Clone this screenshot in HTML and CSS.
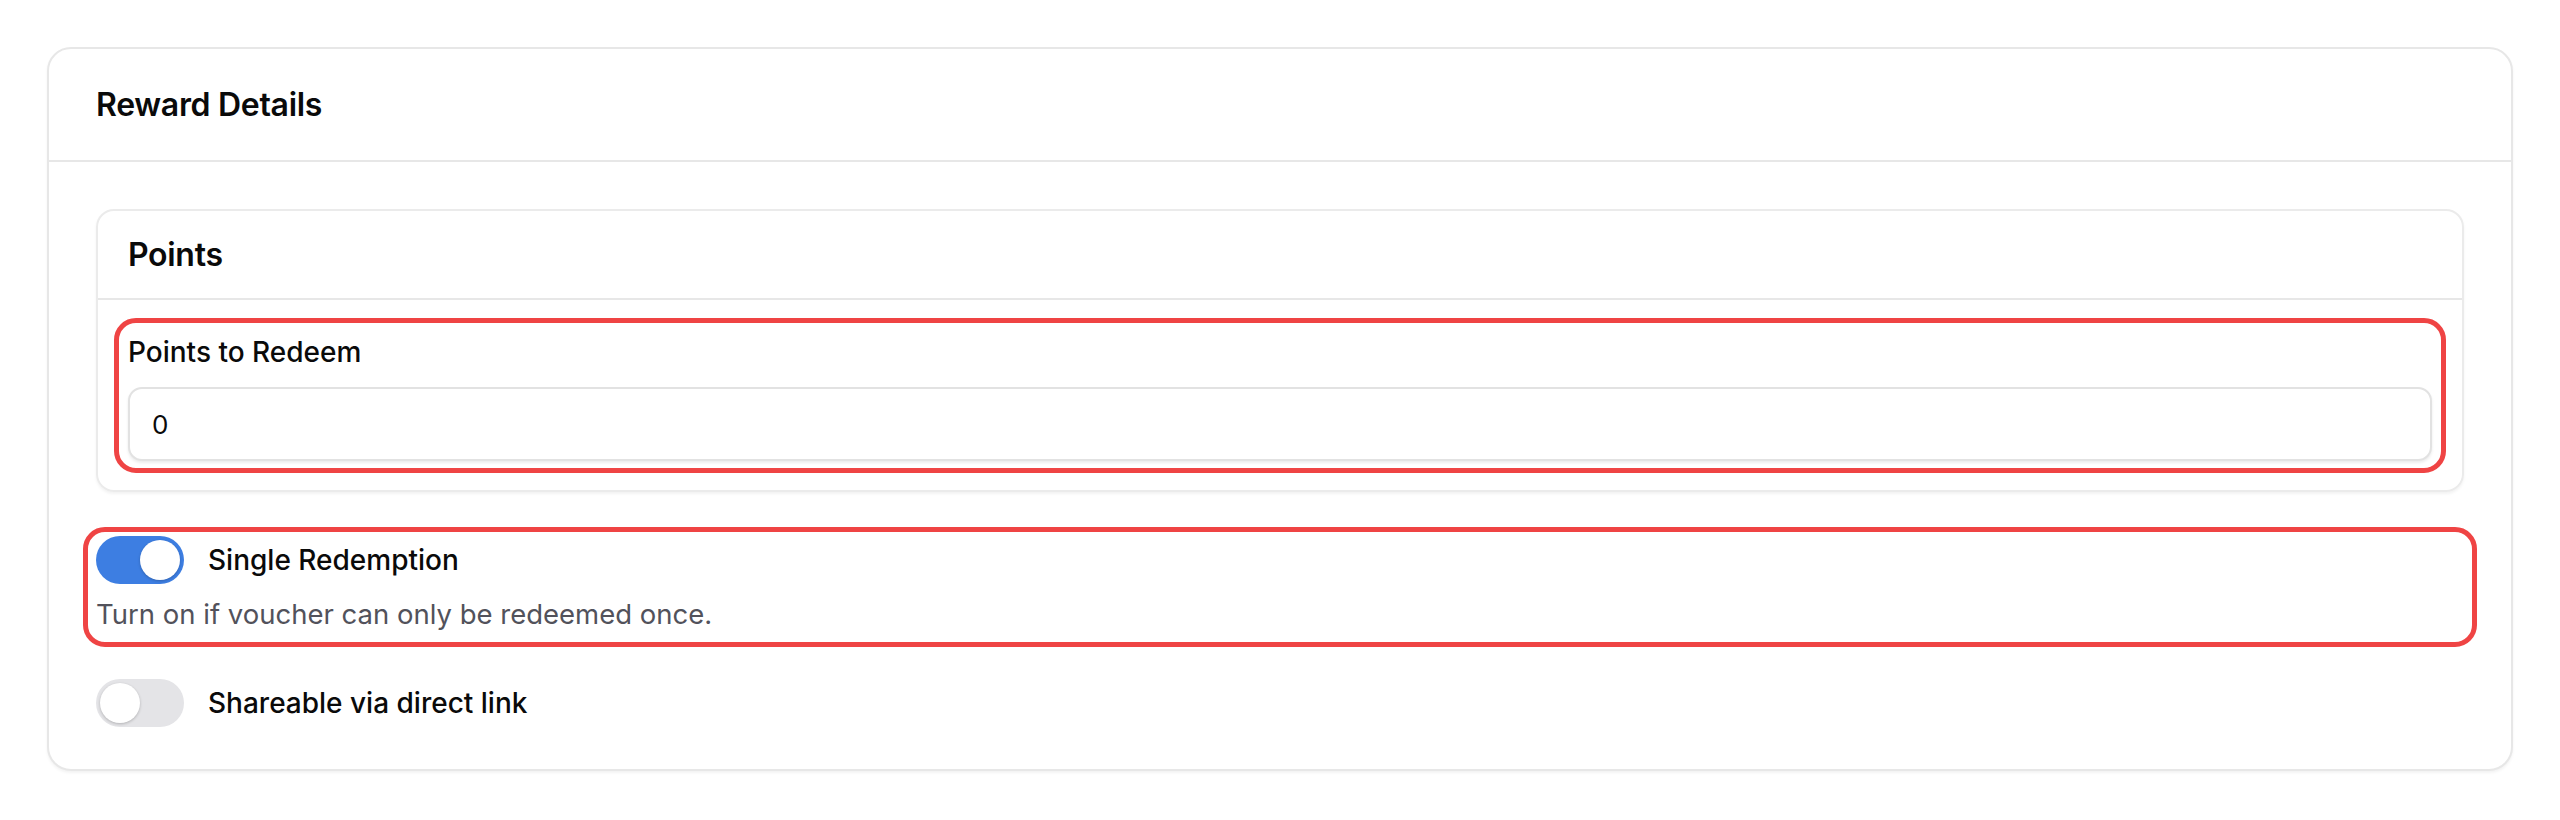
FILE: index.html
```html
<!DOCTYPE html>
<html lang="en">
<head>
<meta charset="utf-8">
<title>Reward Details</title>
<link rel="stylesheet" href="styles.css">
</head>
<body>
  <section class="card">
    <header class="card-header">
      <h2 class="card-title">Reward Details</h2>
    </header>
    <div class="card-body">
      <section class="subcard">
        <div class="subcard-header">
          <h3 class="subcard-title">Points</h3>
        </div>
        <div class="subcard-body">
          <div class="field">
            <label class="field-label" for="points">Points to Redeem</label>
            <input class="text-input" id="points" type="text" value="0">
            <span class="flag flag-field"></span>
          </div>
        </div>
      </section>

      <div class="switch-field">
        <div class="switch-row">
          <span class="switch is-on"><span class="knob"></span></span>
          <span class="switch-label">Single Redemption</span>
        </div>
        <p class="switch-help">Turn on if voucher can only be redeemed once.</p>
        <span class="flag flag-switch"></span>
      </div>

      <div class="switch-row switch-row-last">
        <span class="switch"><span class="knob"></span></span>
        <span class="switch-label">Shareable via direct link</span>
      </div>
    </div>
  </section>
</body>
</html>
```

FILE: styles.css
```css
* { box-sizing: border-box; }

html, body {
  margin: 0;
  background: #ffffff;
}

body {
  padding: 47px;
  font-family: Inter, "Noto Sans", "Liberation Sans", sans-serif;
  color: #0a0a0a;
}

.card {
  background: #ffffff;
  border: 2px solid #e7e7e7;
  border-radius: 24px;
  box-shadow: 0 2px 3px rgba(0, 0, 0, 0.05);
}

.card-header {
  padding: 36px 47px 35px;
  border-bottom: 2px solid #e7e7e7;
}

.card-title {
  margin: 0;
  font-size: 32px;
  line-height: 40px;
  font-weight: 600;
  letter-spacing: -0.3px;
}

.card-body {
  padding: 47px 47px 42px;
}

.subcard {
  border: 2px solid #ebebeb;
  border-radius: 18px;
  box-shadow: 0 2px 3px rgba(0, 0, 0, 0.05);
}

.subcard-header {
  padding: 24px 30px 23px;
  border-bottom: 2px solid #e7e7e7;
}

.subcard-title {
  margin: 0;
  font-size: 32px;
  line-height: 40px;
  font-weight: 600;
  letter-spacing: -0.3px;
}

.subcard-body {
  padding: 32px 30px 29px;
}

.field {
  position: relative;
  display: flex;
  flex-direction: column;
}

.field-label {
  font-size: 28px;
  line-height: 40px;
  font-weight: 500;
  color: #0a0a0a;
}

.text-input {
  margin: 15px 0 0;
  height: 74px;
  width: 100%;
  padding: 0 22px;
  border: 2px solid #e2e2e2;
  border-radius: 14px;
  background: #ffffff;
  box-shadow: 0 2px 3px rgba(0, 0, 0, 0.08);
  font-family: inherit;
  font-size: 26px;
  color: #0a0a0a;
  outline: none;
}

.flag {
  position: absolute;
  border: 5px solid #ef4444;
  border-radius: 22px;
  pointer-events: none;
}

.flag-field {
  top: -14px;
  right: -14px;
  bottom: -12px;
  left: -14px;
}

.switch-field {
  position: relative;
  margin-top: 44px;
}

.flag-switch {
  top: -9px;
  right: -13px;
  bottom: -15px;
  left: -13px;
}

.switch-row {
  display: flex;
  align-items: center;
  gap: 24px;
}

.switch-row-last {
  margin-top: 47px;
}

.switch {
  flex: none;
  display: flex;
  align-items: center;
  justify-content: flex-start;
  width: 88px;
  height: 48px;
  padding: 4px;
  border-radius: 24px;
  background: #e4e4e7;
}

.switch.is-on {
  justify-content: flex-end;
  background: #3d7ee2;
}

.knob {
  width: 40px;
  height: 40px;
  border-radius: 50%;
  background: #ffffff;
  box-shadow: 0 1px 3px rgba(0, 0, 0, 0.22);
}

.switch-label {
  font-size: 28px;
  line-height: 40px;
  font-weight: 500;
  color: #0a0a0a;
}

.switch-help {
  margin: 12px 0 0;
  font-size: 27.5px;
  line-height: 36px;
  color: #52525b;
}
```
